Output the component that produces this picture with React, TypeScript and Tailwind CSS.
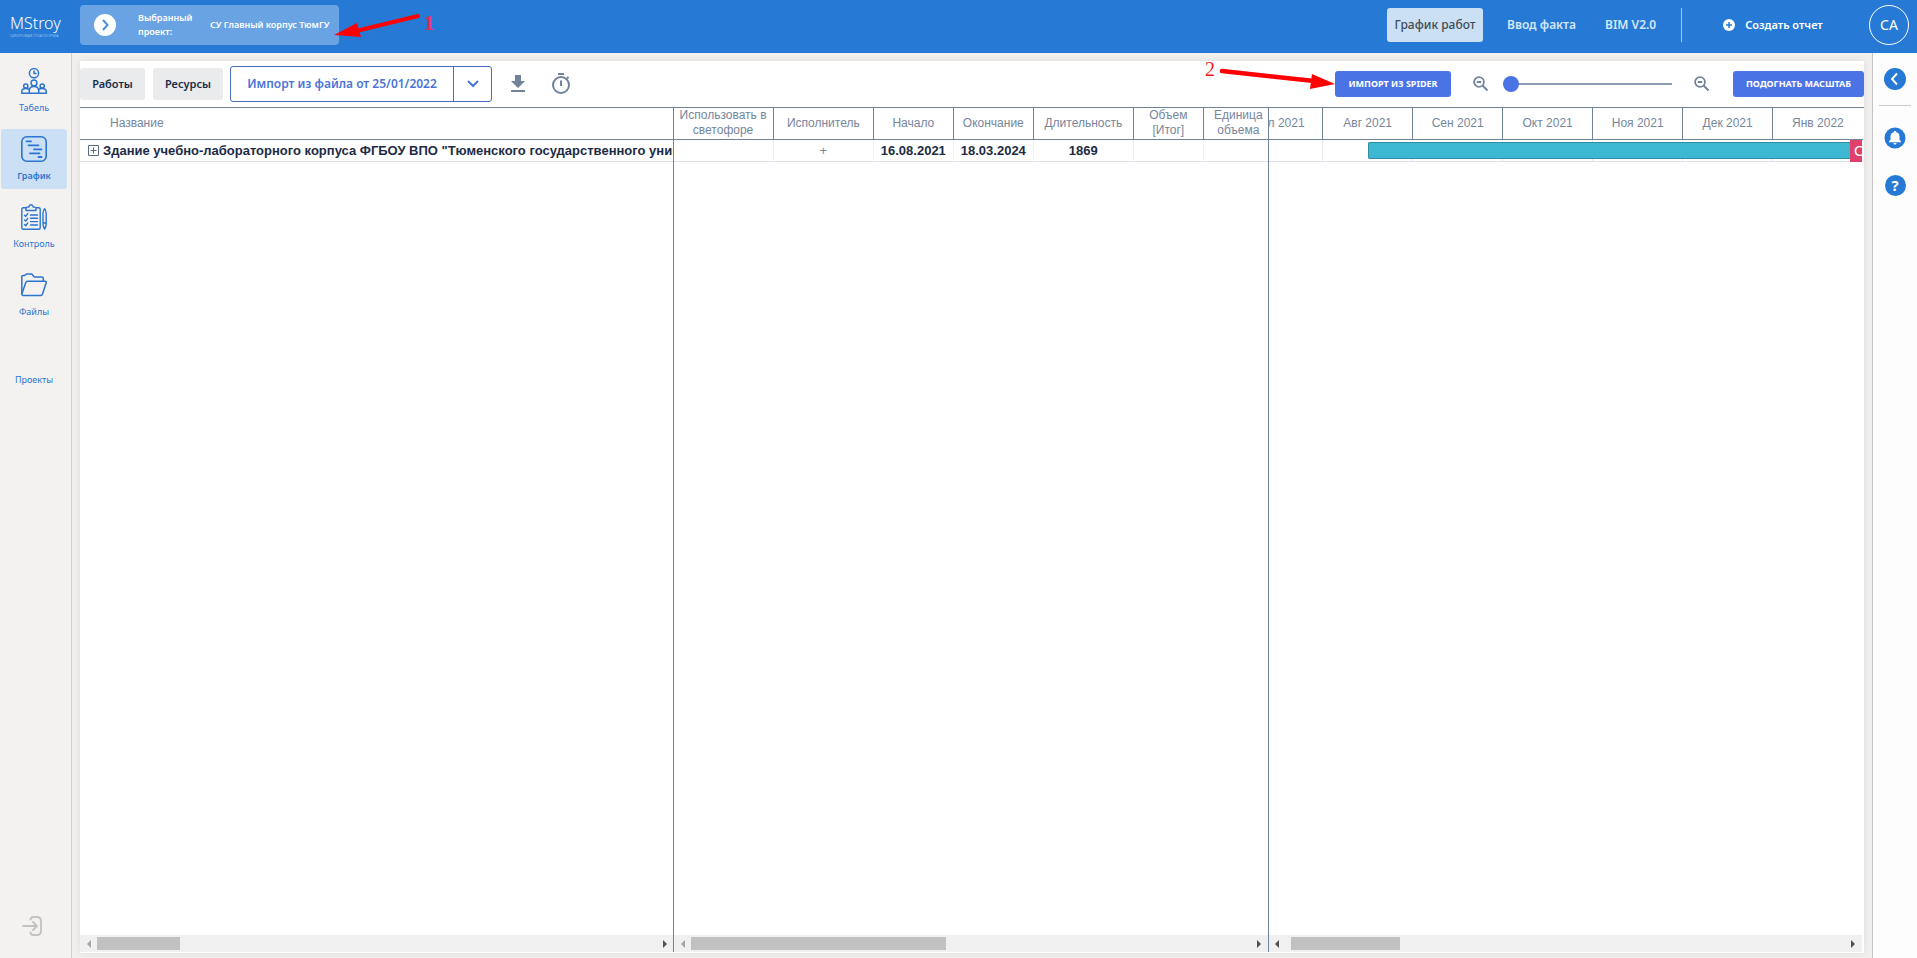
import { useState } from 'react';
import type { ReactNode } from 'react';

type NavItem = {
  label: string;
  icon: ReactNode;
};

type Column = {
  title: string;
  value: string;
  width: string;
};

const columns: Column[] = [
  { title: 'Использовать в светофоре', value: '', width: 'w-[100px]' },
  { title: 'Исполнитель', value: '+', width: 'w-[100px]' },
  { title: 'Начало', value: '16.08.2021', width: 'w-[80px]' },
  { title: 'Окончание', value: '18.03.2024', width: 'w-[80px]' },
  { title: 'Длительность', value: '1869', width: 'w-[100px]' },
  { title: 'Объем [Итог]', value: '', width: 'w-[70px]' },
  { title: 'Единица объема', value: '', width: 'w-[70px]' },
];

const months = ['Июл 2021', 'Авг 2021', 'Сен 2021', 'Окт 2021', 'Ноя 2021', 'Дек 2021', 'Янв 2022'];

function TeamIcon() {
  return (
    <svg viewBox="0 0 26 26" className="size-[26px]" fill="none" stroke="currentColor" strokeWidth="1.5" strokeLinecap="round" strokeLinejoin="round">
      <circle cx="13" cy="5.2" r="4.6" />
      <path d="M13 3v2.4h2" />
      <circle cx="13" cy="15" r="2.9" />
      <circle cx="4.8" cy="18" r="2.1" />
      <circle cx="21.2" cy="18" r="2.1" />
      <path d="M8.3 25.2v-2.6c0-2.4 1.6-4.2 4.7-4.2s4.7 1.8 4.7 4.2v2.6z" />
      <path d="M8 25.2H.8v-1.8c0-1.9 1.5-3 4-3 1.4 0 2.6.4 3.3 1.2M18 25.2h7.2v-1.8c0-1.9-1.5-3-4-3-1.4 0-2.6.4-3.3 1.2" />
    </svg>
  );
}

function GanttIcon() {
  return (
    <svg viewBox="0 0 26 26" className="size-[26px]" fill="none" stroke="currentColor" strokeLinecap="round">
      <rect x="0.8" y="0.8" width="24.4" height="24.4" rx="5" strokeWidth="1.6" />
      <path d="M5.5 5.3H10M7.5 9.3h10M13 13.3h7.5M9 17.3h9.5M17.5 21h3" strokeWidth="1.8" />
    </svg>
  );
}

function ControlIcon() {
  return (
    <svg viewBox="0 0 26 26" className="size-[26px]" fill="none" stroke="currentColor" strokeWidth="1.4" strokeLinecap="round" strokeLinejoin="round">
      <path d="M5 3.8H2.3c-.9 0-1.5.6-1.5 1.5v18.4c0 .9.6 1.5 1.5 1.5h15.4c.9 0 1.5-.6 1.5-1.5V5.3c0-.9-.6-1.5-1.5-1.5H15" />
      <path d="M5 6.5V4.300c0-.7.5-1.2 1.2-1.2h1.5C8 1.7 8.9.8 10 .8s2 .9 2.3 2.3h1.5c.7 0 1.2.5 1.2 1.2v2.200z" />
      <path d="M3.5 11.2l1.2 1.2 2-2.8M3.5 15.9l1.2 1.2 2-2.8M3.5 20.6l1.2 1.2 2-2.8M9.5 11h7M9.5 14.2h7M9.5 17.6h7M9.5 21h7" />
      <path d="M22 9.500c0-2 .6-3.7 1.6-4.7 1 1 1.6 2.7 1.6 4.7v10.3c0 2-.6 3.8-1.6 5.2-1-1.4-1.6-3.2-1.6-5.2zM22 19h3.200" />
    </svg>
  );
}

function FolderIcon() {
  return (
    <svg viewBox="0 0 26 26" className="size-[26px]" fill="none" stroke="currentColor" strokeWidth="1.5" strokeLinecap="round" strokeLinejoin="round">
      <path d="M.8 21.5V4.8c0-.8.5-1.3 1.3-1.3h1.6L5.500 2h5.200l2.600 3h7.400c.9 0 1.600.7 1.600 1.600v2.500" />
      <path d="M6.4 9.2h17.7c.9 0 1.4.7 1.1 1.5l-3.7 11.4c-.3.9-.9 1.400-1.800 1.400H2.200c-1 0-1.600-.9-1.300-1.800L4.800 10.400c.3-.8.8-1.2 1.600-1.200z" />
    </svg>
  );
}

function ExitIcon() {
  return (
    <svg viewBox="0 0 20 20" className="size-5" fill="none" stroke="currentColor" strokeWidth="1.9" strokeLinecap="round" strokeLinejoin="round">
      <path d="M8.5 3.5C8.8 1.8 9.8 1 11.5 1H15c2.500 0 4 1.500 4 4v10c0 2.500-1.500 4-4 4h-3.500c-1.700 0-2.700-.8-3-2.500" />
      <path d="M1 10h14M11 6l4 4-4 4" />
    </svg>
  );
}

function ZoomOutIcon() {
  return (
    <svg viewBox="0 0 18 18" className="size-[18px]" fill="none" stroke="#71829b" strokeWidth="1.8">
      <circle cx="7" cy="7" r="4.9" />
      <path d="M4.8 7h4.4M10.5 10.500l5 5" />
    </svg>
  );
}

const navItems: NavItem[] = [
  { label: 'Табель', icon: <TeamIcon /> },
  { label: 'График', icon: <GanttIcon /> },
  { label: 'Контроль', icon: <ControlIcon /> },
  { label: 'Файлы', icon: <FolderIcon /> },
  { label: 'Проекты', icon: null },
];

function ScrollBar({ thumb, startDisabled, className = '' }: { thumb: string; startDisabled?: boolean; className?: string }) {
  return (
    <div className={`mt-auto flex h-[17px] items-center bg-[#f0f0f0] ${className}`}>
      <button aria-label="Прокрутить влево" className={`flex w-[17px] justify-center ${startDisabled ? 'text-[#a3a3a3]' : 'text-[#505050]'}`}>
        <svg viewBox="0 0 4 8" className="h-2 w-1" fill="currentColor"><path d="M4 0v8L0 4z" /></svg>
      </button>
      <div className={`h-[13px] bg-[#c1c1c1] ${thumb}`} />
      <button aria-label="Прокрутить вправо" className="ml-auto flex w-[17px] justify-center text-[#505050]">
        <svg viewBox="0 0 4 8" className="h-2 w-1" fill="currentColor"><path d="M0 0v8l4-4z" /></svg>
      </button>
    </div>
  );
}

function Header() {
  return (
    <header className="flex h-[53px] shrink-0 items-center bg-[#267ad6] pr-2 pb-[3px] text-white">
      <a href="#" className="flex w-20 flex-col items-start pl-[10px]">
        <span className="text-base leading-[22px] font-light">MStroy</span>
        <span className="text-[4px] leading-[4px] whitespace-nowrap text-[#8dbcf0]">ЦИФРОВАЯ ПЛАТФОРМА</span>
      </a>

      <div className="relative">
        <button className="flex h-10 w-[259px] items-center rounded bg-[#69a3e4] pl-[14px] text-left text-[9px] font-semibold">
          <svg viewBox="0 0 22 22" className="size-[22px] shrink-0">
            <circle cx="11" cy="11" r="11" fill="#fff" />
            <path d="M9 6l4.500 5L9 16" fill="none" stroke="#4a90de" strokeWidth="2" />
          </svg>
          <span className="ml-[22px] w-[72px] leading-[14px]">Выбранный проект:</span>
          <span className="whitespace-nowrap">СУ Главный корпус ТюмГУ</span>
        </button>
        <div className="pointer-events-none absolute top-2 left-[254px] flex w-[110px]">
          <svg viewBox="0 0 86 28" className="h-7 w-[86px] shrink-0">
            <path d="M22 18L84 3" stroke="#f00" strokeWidth="4" strokeLinecap="round" />
            <path d="M0 22L23 10l4 14z" fill="#f00" />
          </svg>
          <span className="ml-1 font-['Liberation_Serif',serif] text-xl leading-5 font-bold text-[#e8304f]">1</span>
        </div>
      </div>

      <nav className="ml-auto flex h-[34px] items-center text-xs">
        <a href="#" className="flex h-full w-24 items-center justify-center rounded-[3px] bg-[#cbe0f4] font-medium text-[#3f4c55]">График работ</a>
        <a href="#" className="ml-6 w-[68px] whitespace-nowrap font-semibold text-[#d3e6fa]">Ввод факта</a>
        <a href="#" className="ml-[30px] w-[54px] whitespace-nowrap font-semibold text-[#d3e6fa]">BIM V2.0</a>
        <span className="ml-[22px] h-full w-px bg-[#a5c8ee]" />
      </nav>
      <button className="ml-[41px] flex items-center gap-[10px] text-[11px] font-semibold">
        <svg viewBox="0 0 12 12" className="size-3">
          <circle cx="6" cy="6" r="6" fill="#fff" />
          <path d="M6 3v6M3 6h6" stroke="#267ad6" strokeWidth="1.5" />
        </svg>
        <span className="w-[78px] whitespace-nowrap">Создать отчет</span>
      </button>
      <button className="ml-[46px] size-10 rounded-full border border-white text-sm">CA</button>
    </header>
  );
}

function Sidebar({ active, onSelect }: { active: string; onSelect: (label: string) => void }) {
  return (
    <aside className="flex w-[72px] shrink-0 flex-col border-r border-[#cfcfcf] bg-[#f3f2f1] pt-2 pr-1 pl-px">
      <nav className="flex flex-col gap-2">
        {navItems.map((item) => (
          <button
            key={item.label}
            onClick={() => onSelect(item.label)}
            className={`flex h-[60px] flex-col items-center rounded-[3px] pt-[7px] text-[9px] text-[#2b74cf] ${active === item.label ? 'bg-[#cbe0f4] font-semibold' : ''}`}
          >
            <span className="flex h-[34px] items-start">{item.icon}</span>
            <span className="leading-3">{item.label}</span>
          </button>
        ))}
      </nav>
      <button aria-label="Выйти" className="mt-auto mb-[22px] flex justify-center pr-1 text-[#c4c3c2]">
        <ExitIcon />
      </button>
    </aside>
  );
}

function Toolbar() {
  const [scale, setScale] = useState(0);

  return (
    <div className="flex h-[46px] shrink-0 items-center">
      <button className="h-8 w-[65px] rounded-[3px] bg-[#e9ebed] text-[11px] font-semibold text-[#1c2b46]">Работы</button>
      <button className="ml-2 h-8 w-[70px] rounded-[3px] bg-[#e9ebed] text-[11px] font-semibold text-[#1c2b46]">Ресурсы</button>
      <div className="ml-[7px] flex h-9 rounded-[3px] border border-[#4a6fc0] text-[#4a74d8]">
        <button className="w-[222px] text-xs font-semibold whitespace-nowrap">Импорт из файла от 25/01/2022</button>
        <button aria-label="Выбрать версию" className="flex w-[38px] items-center justify-center border-l border-[#4a6fc0]">
          <svg viewBox="0 0 12 8" className="h-2 w-3"><path d="M1 1l5 5 5-5" fill="none" stroke="currentColor" strokeWidth="2" /></svg>
        </button>
      </div>
      <button aria-label="Скачать" className="ml-[18px]">
        <svg viewBox="0 0 16 18" className="h-[18px] w-4" fill="#71829b"><path d="M5 0h6v6h4l-7 7-7-7h4zM1 15h14v2H1z" /></svg>
      </button>
      <button aria-label="История" className="ml-[25px]">
        <svg viewBox="0 0 20 22" className="h-[22px] w-5" fill="none" stroke="#71829b" strokeWidth="2">
          <circle cx="10" cy="12" r="8" />
          <path d="M7 1h6M10 7.500v5.500M16 5.500L17.500 4" />
        </svg>
      </button>

      <div className="relative ml-auto flex">
        <button className="h-[26px] w-[116px] rounded-[3px] bg-[#4a74e6] text-[9px] font-bold whitespace-nowrap text-white">ИМПОРТ ИЗ SPIDER</button>
        <div className="pointer-events-none absolute -top-3 right-[116px] flex w-[130px] justify-between">
          <span className="font-['Liberation_Serif',serif] text-xl leading-5 text-[#f01818]">2</span>
          <svg viewBox="0 0 117 32" className="h-8 w-[117px] shrink-0">
            <path d="M4 12l92 10" stroke="#f00" strokeWidth="4.5" strokeLinecap="round" />
            <path d="M117 25L94 15l-2 15z" fill="#f00" />
          </svg>
        </div>
      </div>
      <span className="ml-[21px]"><ZoomOutIcon /></span>
      <input
        type="range"
        min={0}
        max={100}
        value={scale}
        onChange={(e) => setScale(Number(e.target.value))}
        aria-label="Масштаб"
        className="ml-[13px] h-4 w-[169px] appearance-none bg-transparent [&::-webkit-slider-runnable-track]:h-[2px] [&::-webkit-slider-runnable-track]:bg-[#8b9bb1] [&::-webkit-slider-thumb]:-mt-[7px] [&::-webkit-slider-thumb]:size-4 [&::-webkit-slider-thumb]:appearance-none [&::-webkit-slider-thumb]:rounded-full [&::-webkit-slider-thumb]:bg-[#4a74e6]"
      />
      <span className="ml-[21px]"><ZoomOutIcon /></span>
      <button className="ml-[22px] h-[26px] w-[131px] rounded-[3px] bg-[#4a74e6] text-[9px] font-bold whitespace-nowrap text-white">ПОДОГНАТЬ МАСШТАБ</button>
    </div>
  );
}

function Schedule() {
  return (
    <div className="flex min-h-0 flex-1 border-t border-[#71829b] pb-px font-['Liberation_Sans',Arial,sans-serif] text-xs text-[#76869c]">
      {/* Task names */}
      <section className="flex min-w-0 flex-1 flex-col overflow-hidden border-r border-[#71829b]">
        <table className="w-full table-fixed border-collapse">
          <thead>
            <tr className="h-[31px] border-b border-[#71829b]">
              <th className="pl-[30px] text-left font-normal">Название</th>
            </tr>
          </thead>
          <tbody>
            <tr className="h-[22px] border-b border-[#dfe2ea]">
              <td className="overflow-hidden pt-px pl-2 text-[13px] leading-4 font-bold whitespace-nowrap text-[#1d2b45]">
                <div className="flex items-center gap-1">
                  <button aria-label="Развернуть" className="shrink-0">
                    <svg viewBox="0 0 11 11" className="size-[11px]" fill="none" stroke="#5c6b82"><path d="M.5.5h10v10H.5zM5.5 2.5v6M2.5 5.5h6" /></svg>
                  </button>
                  Здание учебно-лабораторного корпуса ФГБОУ ВПО "Тюменского государственного университета"
                </div>
              </td>
            </tr>
          </tbody>
        </table>
        <ScrollBar thumb="w-[83px]" startDisabled />
      </section>

      {/* Task fields */}
      <section className="flex min-w-0 flex-1 flex-col overflow-hidden border-r border-[#71829b]">
        <table className="-ml-px w-[600px] table-fixed border-collapse">
          <thead>
            <tr className="h-[31px] border-b border-[#71829b]">
              {columns.map((col) => (
                <th key={col.title} className={`border-r border-[#71829b] p-0 leading-[15px] font-normal ${col.width}`}>
                  {col.title}
                </th>
              ))}
            </tr>
          </thead>
          <tbody>
            <tr className="h-[22px] border-b border-[#dfe2ea]">
              {columns.map((col) => (
                <td key={col.title} className={`border-r border-[#edeff3] px-0 pt-px pb-0 text-center text-[13px] leading-4 ${col.value === '+' ? '' : 'font-bold text-[#1d2b45]'}`}>
                  {col.value}
                </td>
              ))}
            </tr>
          </tbody>
        </table>
        <ScrollBar thumb="w-[255px]" startDisabled />
      </section>

      <section className="relative flex min-w-0 grow basis-[2px] flex-col overflow-hidden">
        <table className="-ml-9 w-[630px] table-fixed border-collapse">
          <thead>
            <tr className="h-[31px] border-b border-[#71829b]">
              {months.map((month) => (
                <th key={month} className="border-r border-[#71829b] p-0 font-normal last:border-r-0">{month}</th>
              ))}
            </tr>
          </thead>
          <tbody>
            <tr className="h-[22px] border-b border-[#dfe2ea]">
              {months.map((month) => (
                <td key={month} className="border-r border-[#e3e6ee] p-0 last:border-r-0" />
              ))}
            </tr>
          </tbody>
        </table>
        <div className="absolute top-[34px] right-[2px] left-[99px] h-[17px] rounded-l-[2px] border border-r-0 border-[#2f8ea1] bg-[#3db8d3]" />
        <div className="absolute top-8 right-[2px] h-[22px] w-3 overflow-hidden bg-[#e0406c] pl-1 text-[15px] leading-[22px] text-white">С</div>
        <ScrollBar thumb="ml-[5px] w-[109px]" className="mr-[2px]" />
      </section>
    </div>
  );
}

function RightBar() {
  return (
    <aside className="flex w-[45px] shrink-0 flex-col items-center border-l border-[#c4c4c4] bg-[#fdfdfd] pt-[15px]">
      <button aria-label="Открыть панель">
        <svg viewBox="0 0 22 22" className="size-[22px]">
          <circle cx="11" cy="11" r="11" fill="#267ad6" />
          <path d="M13 5.500L8 11l5 5.500" fill="none" stroke="#fff" strokeWidth="1.9" />
        </svg>
      </button>
      <hr className="mt-[15px] w-8 border-[#c9c9c9]" />
      <button aria-label="Уведомления" className="mt-[21px]">
        <svg viewBox="0 0 22 22" className="size-[22px]">
          <circle cx="11" cy="11" r="10.5" fill="#267ad6" />
          <path d="M11 4c.8 0 1.200.5 1.200 1.200 2.200.5 3.300 2.100 3.300 4.300v3.300l1.500 1.700v.8H5v-.8l1.500-1.700V9.500c0-2.200 1.100-3.800 3.300-4.300C9.800 4.500 10.200 4 11 4zM9.500 16h3c0 .9-.6 1.500-1.500 1.500S9.500 16.900 9.500 16z" fill="#fff" />
        </svg>
      </button>
      <button aria-label="Справка" className="mt-[26px] flex size-[21px] items-center justify-center rounded-full bg-[#267ad6] text-[15px] leading-none font-bold text-white">
        ?
      </button>
    </aside>
  );
}

export default function App() {
  const [active, setActive] = useState('График');

  return (
    <div className="flex h-screen flex-col overflow-hidden bg-[#f0efed] font-['Noto_Sans',sans-serif]">
      <Header />
      <div className="flex min-h-0 flex-1">
        <Sidebar active={active} onSelect={setActive} />
        <main className="flex min-w-0 flex-1 p-2 pb-[5px]">
          <div className="flex min-w-0 flex-1 flex-col bg-white shadow-[0_0_6px_rgba(0,0,0,0.08)]">
            <Toolbar />
            <Schedule />
          </div>
        </main>
        <RightBar />
      </div>
    </div>
  );
}
